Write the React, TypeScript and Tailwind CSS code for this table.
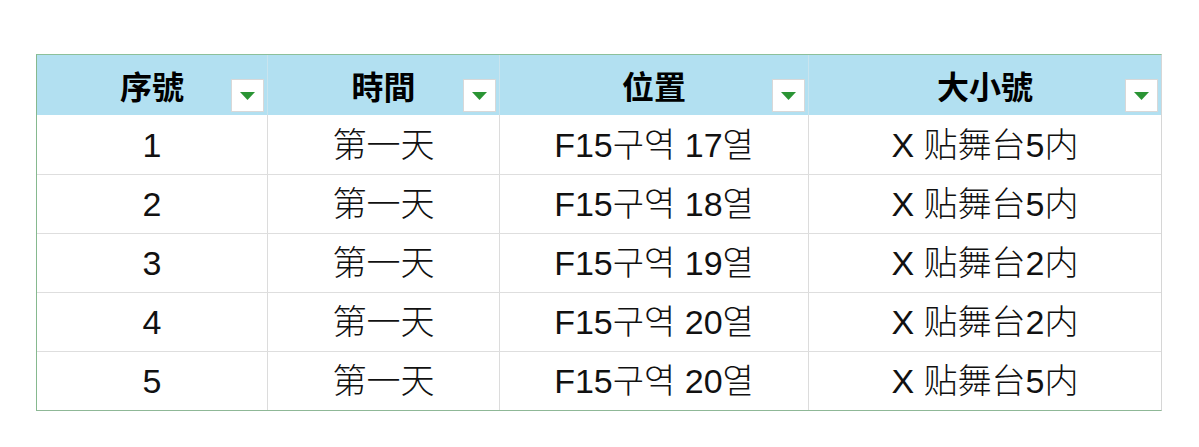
const headers = ["序號", "時間", "位置", "大小號"];

const rows = [
  ["1", "第一天", "F15구역 17열", "X 贴舞台5内"],
  ["2", "第一天", "F15구역 18열", "X 贴舞台5内"],
  ["3", "第一天", "F15구역 19열", "X 贴舞台2内"],
  ["4", "第一天", "F15구역 20열", "X 贴舞台2内"],
  ["5", "第一天", "F15구역 20열", "X 贴舞台5内"],
];

const FilterButton = () => (
  <div className="absolute right-[3px] bottom-[3px] w-[33px] h-[33px] bg-white border border-[#d8d8d8] flex items-center justify-center">
    <svg width="15" height="8" viewBox="0 0 15 8">
      <polygon points="0,0 15,0 7.5,8" fill="#2a9434" />
    </svg>
  </div>
);

export default function App() {
  return (
    <div className="w-[1199px] h-[447px] bg-white pt-[54px] pl-[36px] font-['Liberation_Sans','Noto_Sans_CJK_TC','Noto_Sans_CJK_KR',sans-serif] text-black">
      <div className="w-[1126px] border-l border-t border-b border-l-[#86b98f] border-t-[#8cc09a] border-b-[#8fb897] border-r border-r-[#d6d6d6]">
        <div className="grid grid-cols-[231px_232px_309px_352px] h-[60px] bg-[#b2e0f1]">
          {headers.map((h, i) => (
            <div
              key={h}
              className={`relative flex items-center justify-center text-[32px] font-bold font-['Noto_Sans_CJK_TC',sans-serif] ${i < 3 ? "border-r border-r-[#c9e4ee]" : ""}`}
            >
              {h}
              <FilterButton />
            </div>
          ))}
        </div>
        {rows.map((r, ri) => (
          <div
            key={ri}
            className={`grid grid-cols-[231px_232px_309px_352px] h-[59px] ${ri > 0 ? "border-t border-t-[#dedede]" : ""}`}
          >
            {r.map((c, ci) => (
              <div
                key={ci}
                className={`flex items-center justify-center text-[34px] font-light pt-[1px] text-[#111] ${ci < 3 ? "border-r border-r-[#dcdcdc]" : ""}`}
              >
                {c}
              </div>
            ))}
          </div>
        ))}
      </div>
    </div>
  );
}
